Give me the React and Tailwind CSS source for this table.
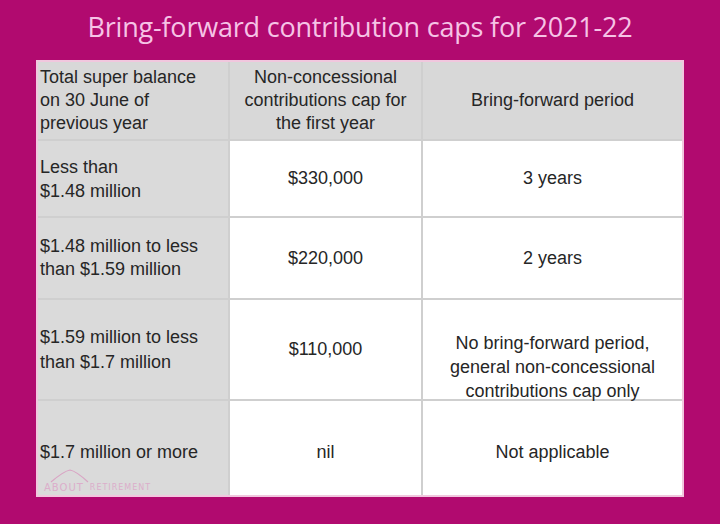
export default function App() {
  const cell = "flex items-center text-[18px] leading-[23px] text-[#262626]";
  const firstCol = `${cell} bg-[#dadada] pl-[2px]`;
  const white = `${cell} bg-white justify-center text-center`;

  return (
    <div className="w-[720px] h-[524px] bg-[#b10a6f] flex flex-col items-center font-['Liberation_Sans',Arial,sans-serif]">
      <h1 className="mt-[4px] h-[46px] flex items-center text-[27px] text-[#f6c3e6] font-['Open_Sans',sans-serif] tracking-[-0.2px]">
        Bring-forward contribution caps for 2021-22
      </h1>

      <div className="mt-[10px] border-2 border-[#f1c7de] bg-[#cfcfcf] grid grid-cols-[190px_191px_259px] grid-rows-[77px_75px_80px_99px_94px] gap-[2px]">
        {/* header */}
        <div className={`${cell} bg-[#d8d8d8] pl-[2px]`}>
          Total super balance<br />on 30 June of<br />previous year
        </div>
        <div className={`${cell} bg-[#d8d8d8] justify-center text-center`}>
          Non-concessional<br />contributions cap for<br />the first year
        </div>
        <div className={`${cell} bg-[#d8d8d8] justify-center text-center`}>
          Bring-forward period
        </div>

        <div className={`${firstCol} leading-[24px]`}>
          Less than<br />$1.48 million
        </div>
        <div className={white}>$330,000</div>
        <div className={white}>3 years</div>

        <div className={firstCol}>
          $1.48 million to less<br />than $1.59 million
        </div>
        <div className={white}>$220,000</div>
        <div className={white}>2 years</div>

        <div className={`${firstCol} leading-[25px]`}>
          $1.59 million to less<br />than $1.7 million
        </div>
        <div className={white}>$110,000</div>
        <div className="flex items-start justify-center text-center bg-white pt-[31px] text-[18px] leading-[24px] text-[#262626]">
          No bring-forward period,<br />general non-concessional<br />contributions cap only
        </div>

        <div className={`${firstCol} relative pt-[8px]`}>
          $1.7 million or more
          <div className="absolute left-[6px] bottom-[3px] flex flex-col items-start">
            <svg width="40" height="14" viewBox="0 0 40 14" className="ml-[6px]">
              <path d="M1 13 Q14 2 20 1 Q26 2 38 13" fill="none" stroke="#d9a4c4" strokeWidth="1.2" />
            </svg>
            <div className="flex gap-[6px] text-[8px] leading-[9px] tracking-[1px] text-[#dcaecb] font-['DejaVu_Sans',sans-serif]">
              <span className="text-[10px]">ABOUT</span>
              <span className="self-end">RETIREMENT</span>
            </div>
          </div>
        </div>
        <div className={`${white} pt-[8px]`}>nil</div>
        <div className={`${white} pt-[8px]`}>Not applicable</div>
      </div>
    </div>
  );
}
